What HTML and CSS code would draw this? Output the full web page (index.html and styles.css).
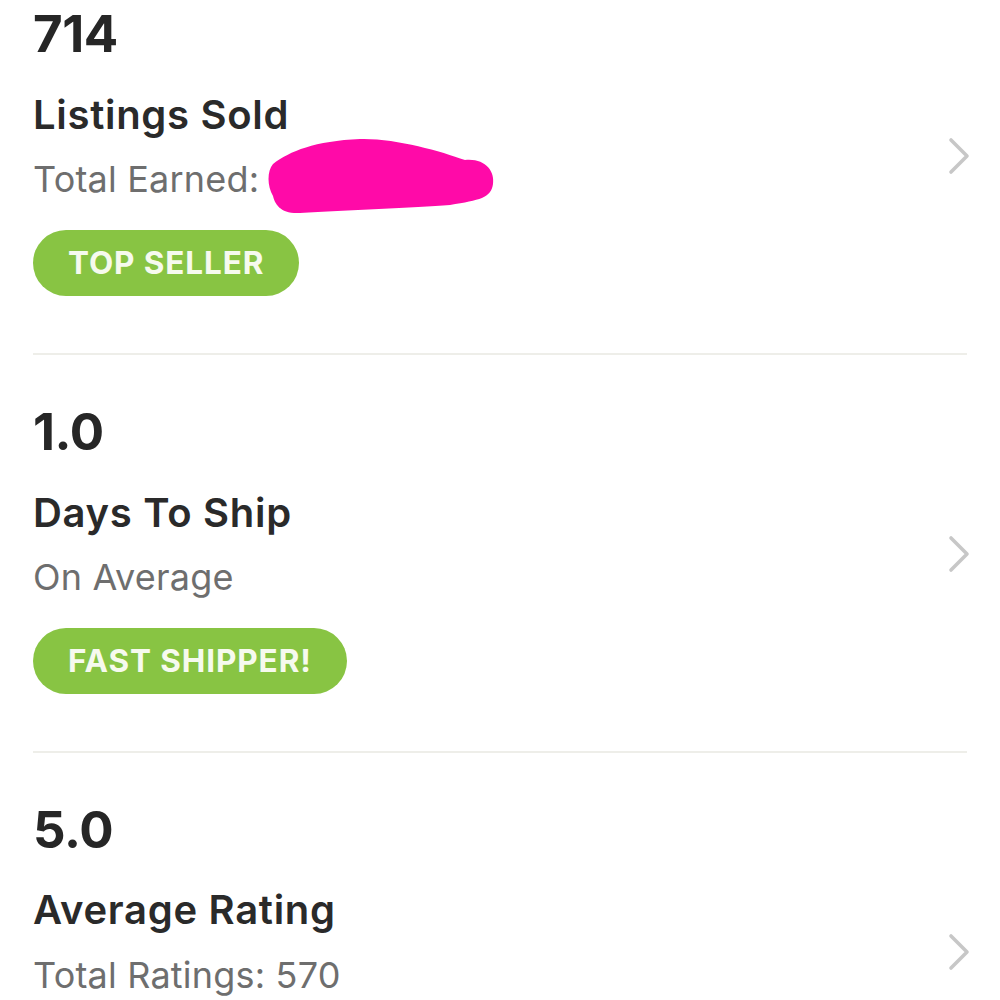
FILE: index.html
```html
<!DOCTYPE html>
<html lang="en">
<head>
<meta charset="utf-8">
<title>Seller Stats</title>
<link rel="stylesheet" href="styles.css">
</head>
<body>
<main class="stats">
  <a class="stat" href="#">
    <div class="stat-body">
      <div class="stat-value">714</div>
      <div class="stat-title">Listings Sold</div>
      <div class="stat-sub">Total Earned:
        <svg class="redact" viewBox="0 0 232 80" width="232" height="80" aria-hidden="true">
          <path d="M8 28 C25 15, 50 5, 95 3 C130 2, 175 15, 200 24 C220 22, 230 35, 228 48 C226 62, 215 64, 185 69 C150 72, 80 74, 35 77 C15 78, 10 68, 8 60 C2 50, 2 35, 8 28 Z" fill="#ff0aa8"/>
        </svg>
      </div>
      <span class="badge">TOP SELLER</span>
    </div>
    <svg class="chevron" viewBox="0 0 26 40" width="26" height="40" aria-hidden="true"><polyline points="5,4 21,20 5,36" fill="none" stroke="#c7c7c7" stroke-width="3.6" stroke-linecap="round" stroke-linejoin="round"/></svg>
  </a>
  <a class="stat" href="#">
    <div class="stat-body">
      <div class="stat-value">1.0</div>
      <div class="stat-title">Days To Ship</div>
      <div class="stat-sub">On Average</div>
      <span class="badge">FAST SHIPPER!</span>
    </div>
    <svg class="chevron" viewBox="0 0 26 40" width="26" height="40" aria-hidden="true"><polyline points="5,4 21,20 5,36" fill="none" stroke="#c7c7c7" stroke-width="3.6" stroke-linecap="round" stroke-linejoin="round"/></svg>
  </a>
  <a class="stat" href="#">
    <div class="stat-body">
      <div class="stat-value">5.0</div>
      <div class="stat-title">Average Rating</div>
      <div class="stat-sub">Total Ratings: 570</div>
      <span class="badge">HIGHLY RATED!</span>
    </div>
    <svg class="chevron" viewBox="0 0 26 40" width="26" height="40" aria-hidden="true"><polyline points="5,4 21,20 5,36" fill="none" stroke="#c7c7c7" stroke-width="3.6" stroke-linecap="round" stroke-linejoin="round"/></svg>
  </a>
</main>
</body>
</html>
```
FILE: styles.css
```css
html, body {
  margin: 0;
  padding: 0;
  background: #ffffff;
}

body {
  font-family: Inter, Lato, "Liberation Sans", sans-serif;
  color: #2a2a2a;
}

.stats {
  display: flex;
  flex-direction: column;
  padding: 0 33px;
}

.stat {
  display: flex;
  align-items: center;
  justify-content: space-between;
  padding: 46px 0 57px;
  border-bottom: 2px solid #eeeee9;
  text-decoration: none;
  color: inherit;
}

.stat:first-child {
  padding-top: 3px;
}

.stat-body {
  display: flex;
  flex-direction: column;
  align-items: flex-start;
}

.stat-value {
  font-size: 51px;
  font-weight: 700;
  line-height: 1.2;
  letter-spacing: -0.4px;
  color: #262626;
}

.stat-title {
  font-size: 40px;
  font-weight: 600;
  line-height: 1.2;
  letter-spacing: 0.7px;
  color: #2a2a2a;
  margin-top: 26.4px;
}

.stat-sub {
  position: relative;
  font-size: 36px;
  font-weight: 400;
  line-height: 1.2;
  letter-spacing: 0.2px;
  color: #6e6e6e;
  margin-top: 19.6px;
}

.redact {
  position: absolute;
  left: 232px;
  top: -22px;
}

.badge {
  display: inline-flex;
  align-items: center;
  height: 66px;
  margin-top: 28.6px;
  padding: 0 35px;
  border-radius: 33px;
  background: #88c443;
  color: #f6faee;
  font-size: 31.5px;
  font-weight: 700;
  letter-spacing: 0.9px;
}

.chevron {
  flex: none;
  margin-right: -5px;
  margin-top: 13px;
}
```
